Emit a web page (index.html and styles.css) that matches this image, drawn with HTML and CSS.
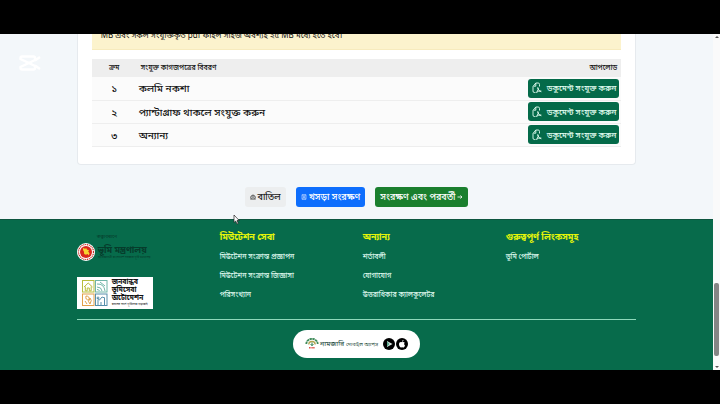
FILE: index.html
```html
<!DOCTYPE html>
<html lang="bn">
<head>
    <meta charset="UTF-8">
    <meta name="viewport" content="width=device-width, initial-scale=1.0">
    <title>মিউটেশন - ভূমি মন্ত্রণালয়</title>
    <link rel="stylesheet" href="styles.css">
</head>
<body>
    <div class="screen">
        <div class="page">
            <main>
                <section class="card">
                    <div class="alert">MB এবং সকল সংযুক্তিকৃত pdf ফাইল সাইজ অবশ্যই ২৫ MB মধ্যে হতে হবে।</div>
                    <table class="docs">
                        <thead>
                            <tr>
                                <th class="col-no">ক্রম</th>
                                <th class="col-name">সংযুক্ত কাগজপত্রের বিবরণ</th>
                                <th class="col-upload">আপলোড</th>
                            </tr>
                        </thead>
                        <tbody>
                            <tr>
                                <td class="col-no">১</td>
                                <td>কলমি নকশা</td>
                                <td class="col-upload">
                                    <button type="button" class="btn-upload">
                                        <svg viewBox="0 0 10 12"><use href="#clip"/></svg>
                                        <span>ডকুমেন্ট সংযুক্ত করুন</span>
                                    </button>
                                </td>
                            </tr>
                            <tr>
                                <td class="col-no">২</td>
                                <td>প্যান্টাগ্রাফ থাকলে সংযুক্ত করুন</td>
                                <td class="col-upload">
                                    <button type="button" class="btn-upload">
                                        <svg viewBox="0 0 10 12"><use href="#clip"/></svg>
                                        <span>ডকুমেন্ট সংযুক্ত করুন</span>
                                    </button>
                                </td>
                            </tr>
                            <tr>
                                <td class="col-no">৩</td>
                                <td>অন্যান্য</td>
                                <td class="col-upload">
                                    <button type="button" class="btn-upload">
                                        <svg viewBox="0 0 10 12"><use href="#clip"/></svg>
                                        <span>ডকুমেন্ট সংযুক্ত করুন</span>
                                    </button>
                                </td>
                            </tr>
                        </tbody>
                    </table>
                </section>

                <div class="actions">
                    <button type="button" class="btn btn-cancel">
                        <svg viewBox="0 0 6 6"><path d="M1.2 4.6A2.2 2.2 0 1 1 4.8 4.6M.3 5H5.7M2 3H4" fill="none" stroke="currentColor" stroke-width=".8"/></svg>
                        <span>বাতিল</span>
                    </button>
                    <button type="button" class="btn btn-draft">
                        <svg viewBox="0 0 6 6"><path d="M1 .7H5V5.3H1ZM2 .7V2.3H4V.7M2 5.3V3.6H4V5.3" fill="none" stroke="currentColor" stroke-width=".5"/></svg>
                        <span>খসড়া সংরক্ষণ</span>
                    </button>
                    <button type="button" class="btn btn-next">
                        <span>সংরক্ষণ এবং পরবর্তী</span>
                        <svg viewBox="0 0 6 6"><path d="M.5 3H5M3.4 1.5L5 3L3.4 4.5" fill="none" stroke="currentColor" stroke-width=".8"/></svg>
                    </button>
                </div>
            </main>

            <footer>
                <div class="footer-inner">
                    <div class="footer-cols">
                        <div class="brands">
                            <span class="managed">তত্ত্বাবধানে</span>
                            <a href="#" class="ministry">
                                <svg viewBox="0 0 18 18">
                                    <circle cx="9" cy="9" r="9" fill="#fff"/>
                                    <circle cx="9" cy="9" r="7.5" fill="none" stroke="#c9382d" stroke-width="1.2" stroke-dasharray="1.2 .7"/>
                                    <circle cx="9" cy="9" r="6" fill="#d9271c"/>
                                    <path d="M6.2 4.8L7.8 5.8L9.4 5.2L10 6.8L12 7L11.2 8.6L12.5 10.2L11.8 12.6L10.6 10.9L9 11.8L7.2 11L6.9 8.6L6 7Z" fill="#f6d32f"/>
                                </svg>
                                <span class="ministry-text">
                                    <strong>ভূমি মন্ত্রণালয়</strong>
                                    <small>গণপ্রজাতন্ত্রী বাংলাদেশ সরকার ভূমি মন্ত্রণালয়</small>
                                </span>
                            </a>
                            <a href="#" class="automation">
                                <svg viewBox="0 0 26 26" fill="none" stroke-width="1">
                                    <g stroke="#b8bd3e"><rect x=".5" y=".5" width="11.5" height="11.5"/><path d="M2 7L6.2 3L10.5 7M3.3 6.5V10.8H5.2V8H7.3V10.8H9.2V6.5"/></g>
                                    <g stroke="#6fb5a8"><rect x="13.5" y=".5" width="11.5" height="11.5"/><path d="M15 4Q22 3.5 23 11M15 7Q19.5 7 20 11M15 9.5Q17 9.5 17.5 11M18 2L23 6"/></g>
                                    <g stroke="#e2a04a"><rect x=".5" y="14" width="11.5" height="11.5"/><path d="M4 16Q8 16 7 20Q3 20 4 16M8 18Q10.5 20 8 24Q5 22 8 18M3 21L5 24"/></g>
                                    <g stroke="#568eab"><rect x="13.5" y="14" width="11.5" height="11.5"/><path d="M16 25V20M19 25V22M22.5 25V18M15 18L17.5 20L20 17L23 18"/><circle cx="16" cy="18" r="1"/></g>
                                </svg>
                                <span class="automation-text">
                                    <strong>জনবান্ধব<br>ভূমিসেবা<br>অটোমেশন</strong>
                                    <small>বদলের সাথে ভূমিসেবা গড়বোই</small>
                                </span>
                            </a>
                        </div>
                        <nav>
                            <h3>মিউটেশন সেবা</h3>
                            <a href="#">মিউটেশন সংক্রান্ত প্রজ্ঞাপন</a>
                            <a href="#">মিউটেশন সংক্রান্ত জিজ্ঞাসা</a>
                            <a href="#">পরিসংখ্যান</a>
                        </nav>
                        <nav>
                            <h3>অন্যান্য</h3>
                            <a href="#">শর্তাবলী</a>
                            <a href="#">যোগাযোগ</a>
                            <a href="#">উত্তরাধিকার ক্যালকুলেটর</a>
                        </nav>
                        <nav>
                            <h3>গুরুত্বপূর্ণ লিংকসমূহ</h3>
                            <a href="#">ভূমি পোর্টাল</a>
                        </nav>
                    </div>
                    <a href="#" class="app-pill">
                        <svg class="app-logo" viewBox="0 0 14 12">
                            <path d="M1.3 6A5.7 5.2 0 0 1 12.7 6" fill="none" stroke="#3e8a59" stroke-width="1.8" stroke-dasharray="2.4 .5"/>
                            <path d="M3.8 6.5A3.2 3 0 0 1 10.2 6.5" fill="none" stroke="#b0a34c" stroke-width="1.3"/>
                            <path d="M7 4.5V8M5.5 6L7 7.5L8.5 6" fill="none" stroke="#338354"/>
                            <path d="M4 9.8H10" stroke="#df5146" stroke-width="1.4" stroke-dasharray="1 .4"/>
                        </svg>
                        <span class="app-name">নামজারি <small>মোবাইল অ্যাপস</small></span>
                        <span class="stores">
                            <svg viewBox="0 0 12 12"><circle cx="6" cy="6" r="6"/><path d="M4 3L9.5 6L4 9Z" fill="#dfe9e4"/><path d="M4 3L6.5 6L4 9Z" fill="#5ba68c"/></svg>
                            <svg viewBox="0 0 12 12"><circle cx="6" cy="6" r="6"/><path d="M6 4.3C4.5 3.5 3 4.4 3 6.2C3 8 4.2 9.6 5.1 9.5L6.1 9.2L7.1 9.5C8 9.5 8.7 8.3 9 7.4C7.9 6.9 7.9 5.3 8.8 4.8C8 3.8 6.9 4 6 4.3ZM6 3.7C5.9 2.7 6.7 2 7.5 1.9C7.6 2.8 6.9 3.6 6 3.7Z" fill="#fff"/></svg>
                        </span>
                    </a>
                    <p class="credit">কারিগরি সহায়তায়: মিউটেশন সেবা, ভূমি মন্ত্রণালয়</p>
                </div>
            </footer>
        </div>
        <div class="scrollbar">
            <span class="arrow-up"></span>
            <span class="thumb"></span>
            <span class="arrow-down"></span>
        </div>

        <svg class="watermark" viewBox="0 0 22 16" fill="none" stroke="#fff" stroke-width="2.4">
            <path d="M21 2L16 5.5M21 14L16 10.5M16 5V2.8Q16 1.5 14.5 1.5H3Q1.5 1.5 1.5 3V4L16 11V13Q16 14.5 14.5 14.5H3Q1.5 14.5 1.5 13V12L16 5"/>
        </svg>
        <svg class="cursor" viewBox="0 0 7 11"><path d="M1 1V8.5L2.7 7L4 10L5.3 9.4L4 6.5H6.2Z" fill="#fff" stroke="#222" stroke-width=".7"/></svg>
    </div>

    <svg class="defs">
        <symbol id="clip" viewBox="0 0 10 12">
            <path d="M3.5 10.5H2.2Q1 10.5 1 9V4.5L3.8 1H6.2Q7.5 1 7.5 2.5V4.5M3.8 1V4.2H1.5M5.8 5.5Q7 7.5 4.5 10.5M5.8 5.5Q6 9 9.3 9.8M4.5 10.5Q6 8.8 9.3 9" fill="none" stroke="currentColor" stroke-width=".9"/>
        </symbol>
    </svg>
</body>
</html>
```
FILE: styles.css
```css
* {
    margin: 0;
    padding: 0;
    box-sizing: border-box;
}

body {
    font-family: "Noto Sans", "Noto Sans Bengali", sans-serif;
    background: #000;
    color: #111;
    height: 100vh;
    padding: 34px 0;
    overflow: hidden;
}

button {
    font-family: inherit;
    border: none;
    cursor: pointer;
}

a {
    color: inherit;
    text-decoration: none;
}

svg {
    flex-shrink: 0;
}

.defs {
    display: none;
}

.screen {
    position: relative;
    display: flex;
    height: 100%;
    overflow: hidden;
}

.page {
    flex: 1;
    background: #f3f7fa;
    overflow: hidden;
}

main,
.footer-inner {
    width: 78.5%;
    margin: 0 auto;
}

main {
    padding-bottom: 12px;
}

/* documents card */
.card {
    background: #fff;
    border: 1px solid #e6eaee;
    border-top: none;
    border-radius: 0 0 4px 4px;
    padding: 0 14px 17px;
}

.alert {
    height: 16px;
    display: flex;
    align-items: flex-end;
    padding: 0 9px 7px;
    background: #fcf3cd;
    border-bottom: 1px solid #f7ebbd;
    font-size: 8px;
    line-height: 14px;
    white-space: nowrap;
}

.docs {
    width: 100%;
    margin-top: 9px;
    border-collapse: collapse;
    font-size: 10px;
    font-weight: 500;
    line-height: 16px;
}

.docs th {
    height: 18px;
    background: #eee;
    font-size: 7px;
    font-weight: 500;
    text-align: left;
    padding: 0 4px;
}

.docs td {
    height: 23px;
    background: #fbfbfb;
    border-bottom: 1px solid #eee;
    padding: 0 2px;
}

.docs .col-no {
    width: 45px;
    text-align: center;
}

.docs .col-upload {
    text-align: right;
}

.btn-upload {
    display: inline-flex;
    align-items: center;
    justify-content: space-between;
    gap: 5px;
    height: 19px;
    padding: 0 3px 0 4px;
    border-radius: 3px;
    background: #046a49;
    color: #e4fff3;
    font-size: 8px;
    font-weight: 500;
    line-height: 16px;
    vertical-align: middle;
}

.btn-upload svg {
    width: 10px;
    height: 12px;
}

/* form actions */
.actions {
    display: flex;
    justify-content: center;
    gap: 10px;
    margin-top: 22px;
}

.btn {
    display: flex;
    align-items: center;
    gap: 2px;
    height: 20px;
    padding: 0 5px;
    border-radius: 3px;
    color: #fff;
    font-size: 9px;
    font-weight: 500;
    line-height: 16px;
}

.btn svg {
    width: 6px;
    height: 6px;
}

.btn-cancel {
    background: #eceeef;
    color: #222;
}

.btn-draft {
    background: #0d6efd;
}

.btn-next {
    background: #1a7f2e;
}

/* footer */
footer {
    background: #076b4b;
    border-top: 1px solid #0d553f;
    color: #dcf7ec;
}

.footer-cols {
    display: grid;
    grid-template-columns: repeat(3, 143px) 1fr;
    height: 100px;
    padding-top: 9px;
    border-bottom: 1px solid #8ed9bb;
}

nav {
    display: flex;
    flex-direction: column;
    gap: 5px;
}

nav h3 {
    color: #e4f50a;
    font-size: 9px;
    line-height: 16px;
}

nav a {
    font-size: 7px;
    font-weight: 500;
    line-height: 14px;
}

.brands {
    display: flex;
    flex-direction: column;
    align-items: flex-start;
    color: #063c2b;
}

.managed {
    padding-left: 20px;
    font-size: 5px;
    line-height: 14px;
}

.ministry {
    display: flex;
    align-items: center;
    gap: 3px;
}

.ministry svg {
    width: 18px;
    height: 18px;
}

.ministry-text,
.automation-text {
    display: flex;
    flex-direction: column;
    white-space: nowrap;
}

.ministry strong {
    font-size: 9px;
    line-height: 11px;
}

.ministry small {
    font-size: 3px;
    line-height: 4px;
}

.automation {
    display: flex;
    align-items: center;
    gap: 4px;
    height: 32px;
    margin-top: 16px;
    padding: 0 5px;
    background: #fff;
    color: #111;
}

.automation svg {
    width: 26px;
    height: 26px;
}

.automation strong {
    font-size: 7px;
    line-height: 8px;
}

.automation small {
    font-size: 3px;
    line-height: 5px;
}

.app-pill {
    display: flex;
    align-items: center;
    gap: 1px;
    width: max-content;
    height: 28px;
    margin: 10px auto 0;
    padding: 0 12px;
    border-radius: 14px;
    background: #fff;
    color: #174535;
}

.app-logo {
    width: 14px;
    height: 12px;
}

.app-name {
    font-size: 7px;
    line-height: 14px;
}

.app-name small {
    font-size: 5px;
}

.stores {
    display: flex;
    gap: 1px;
    margin-left: 4px;
}

.stores svg {
    width: 12px;
    height: 12px;
}

.credit {
    margin-top: 8px;
    font-size: 8px;
    line-height: 16px;
    text-align: center;
}

/* browser scrollbar */
.scrollbar {
    display: flex;
    flex-direction: column;
    align-items: center;
    width: 7px;
    padding: 2px 0;
    background: #fafafa;
}

.arrow-up,
.arrow-down {
    border: 2px solid transparent;
}

.arrow-up {
    border-top: none;
    border-bottom-color: #555;
}

.arrow-down {
    border-bottom: none;
    border-top-color: #555;
    margin-top: 10px;
}

.thumb {
    width: 5px;
    height: 22%;
    margin-top: auto;
    border-radius: 2px;
    background: #858585;
}

/* overlays */
.watermark {
    position: absolute;
    top: 21px;
    left: 19px;
    width: 22px;
    height: 16px;
}

.cursor {
    position: absolute;
    top: 180px;
    left: 233px;
    width: 7px;
    height: 11px;
}
```
